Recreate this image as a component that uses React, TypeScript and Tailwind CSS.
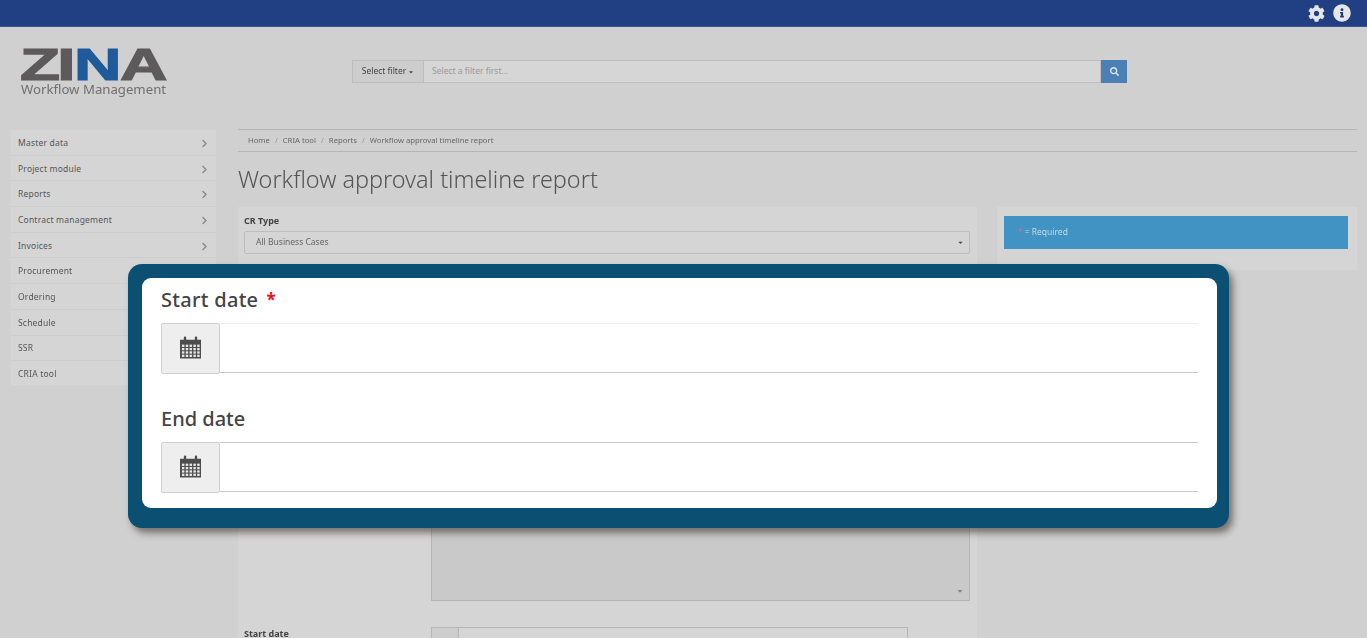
import { FaCog, FaInfoCircle, FaSearch, FaChevronRight, FaCaretDown } from "react-icons/fa";

const MENU = [
  { label: "Master data", arrow: true },
  { label: "Project module", arrow: true },
  { label: "Reports", arrow: true },
  { label: "Contract management", arrow: true },
  { label: "Invoices", arrow: true },
  { label: "Procurement", arrow: false },
  { label: "Ordering", arrow: false },
  { label: "Schedule", arrow: false },
  { label: "SSR", arrow: false },
  { label: "CRIA tool", arrow: false },
];

function CalendarIcon({ className }: { className?: string }) {
  const cols = [2, 6, 10, 14, 18];
  const rows = [8.5, 12, 15.5, 19];
  return (
    <svg viewBox="0 0 22 23" className={className}>
      <path fill="#4d4d4d" d="M0 3.5h4V1.2C4 .5 4.5 0 5.2 0s1.3.5 1.3 1.2v2.3h9V1.2c0-.7.6-1.2 1.3-1.2S18 .5 18 1.2v2.3h4V23H0z" />
      {rows.map((y) =>
        cols.map((x) => <rect key={`${x}-${y}`} x={x} y={y} width="2.6" height="2.4" fill="#e8e8e8" />)
      )}
    </svg>
  );
}

function DateGroup({ topLine }: { topLine: string }) {
  return (
    <div className="flex h-[51px]">
      <div className="flex w-[59px] items-center justify-center rounded-[2px] border border-[#cfcfcf] bg-[#eeeeee] pb-[2px]">
        <CalendarIcon className="h-[23px] w-[21px]" />
      </div>
      <div className={`mb-px flex-1 border-t border-b border-b-[#c8c8c8] ${topLine}`} />
    </div>
  );
}

export default function App() {
  return (
    <div className="relative h-[638px] w-[1367px] overflow-hidden bg-[#d0d0d0] font-['Noto_Sans',sans-serif]">
      {/* dimmed page behind the popup */}
      <div className="blur-[0.7px]">
        <div className="flex h-[27px] items-center justify-end gap-[8px] border-b border-[#3c5590] bg-[#213f83] pr-[16px] text-[#e6e6e6]">
          <FaCog className="h-[17px] w-[17px]" />
          <FaInfoCircle className="h-[18px] w-[18px]" />
        </div>

        <div className="flex h-[102px]">
          <div className="ml-[20px] mt-[21px] w-[147px]">
            <div className="h-[34px] font-['Liberation_Sans',sans-serif] text-[45px] leading-[34px] font-bold whitespace-nowrap text-[#5c5a5a] [-webkit-text-stroke:1.2px_currentColor]">
              <span className="inline-block origin-left scale-x-[1.46]">
                Z<span className="ml-[-2px]">I</span>
                <span className="ml-[-1px] text-[#1f5a9a]">N</span>
                <span className="ml-[-1px]">A</span>
              </span>
            </div>
            <div className="ml-[1px] mt-[-1px] text-[13.2px] leading-[17px] whitespace-nowrap text-[#6f6f6f]">Workflow Management</div>
          </div>
          <div className="ml-[185px] mt-[33px] flex h-[23px] w-[775px] text-[8.5px]">
            <div className="flex w-[72px] items-center justify-center gap-[2px] border border-[#bdbdbd] bg-[#cdcdcd] text-[#444444]">
              Select filter
              <FaCaretDown className="h-[6px] w-[6px]" />
            </div>
            <div className="flex flex-1 items-center border-y border-r border-[#bdbdbd] bg-[#d6d6d6] pl-[8px] text-[#9a9a9a]">
              Select a filter first...
            </div>
            <div className="flex w-[26px] items-center justify-center bg-[#4a80b3] text-[#dfe6ee]">
              <FaSearch className="h-[9px] w-[9px]" />
            </div>
          </div>
        </div>

        <div className="flex items-start">
          <div className="ml-[11px] mt-[1px] w-[205px] bg-[#d6d5d6]">
            {MENU.map((item) => (
              <div key={item.label} className="flex h-[25.7px] items-center justify-between border-b border-[#cdcdcd] pl-[7px] pr-[7px] pt-[2px] text-[8.5px] tracking-[0.2px] text-[#555555]">
                {item.label}
                {item.arrow && <FaChevronRight className="h-[9px] w-[9px] text-[#8a8a8a]" />}
              </div>
            ))}
          </div>

          <div className="ml-[22px] w-[1119px]">
            <div className="flex h-[23px] items-center gap-[5px] border-y border-[#b5b5b5] pl-[10px] text-[7.7px] text-[#666666]">
              <span>Home</span>
              <span className="text-[#999999]">/</span>
              <span>CRIA tool</span>
              <span className="text-[#999999]">/</span>
              <span>Reports</span>
              <span className="text-[#999999]">/</span>
              <span>Workflow approval timeline report</span>
            </div>
            <h1 className="mt-[12px] text-[23.4px] leading-[30px] font-light text-[#555555]">Workflow approval timeline report</h1>

            <div className="mt-[13px] flex items-start gap-[20px]">
              <div className="h-[440px] w-[739px] bg-[#d6d5d6] px-[6px] pt-[7px]">
                <div className="text-[9px] leading-[13px] font-bold text-[#444444]">CR Type</div>
                <div className="mr-[1px] mt-[4px] flex h-[23px] items-center justify-between rounded-[2px] border border-[#bdbdbd] bg-[#d5d5d5] pl-[11px] pr-[5px] text-[8.5px] text-[#666666]">
                  All Business Cases
                  <FaCaretDown className="h-[7px] w-[7px] text-[#444444]" />
                </div>
                <div className="ml-[187px] mr-[1px] mt-[201px] flex h-[146px] items-end justify-end border border-[#b5b5b5] bg-[#c9c9c9] p-[5px]">
                  <FaCaretDown className="h-[8px] w-[8px] text-[#888888]" />
                </div>
                <div className="mt-[26px] flex items-start">
                  <div className="w-[187px] text-[9px] leading-[13px] font-bold text-[#444444]">Start date</div>
                  <div className="flex h-[24px] w-[477px] border border-[#b5b5b5] bg-[#d6d6d6]">
                    <div className="w-[27px] border-r border-[#b5b5b5] bg-[#cdcdcd]" />
                  </div>
                </div>
              </div>

              <div className="h-[63px] w-[360px] bg-[#d6d5d6] pl-[7px] pr-[9px] pt-[9px]">
                <div className="flex h-[33px] items-center gap-[2px] bg-[#4093c2] pl-[14px] text-[8.5px] text-[#c9dbe6]">
                  <span className="text-[#c2789a]">*</span>
                  <span>= Required</span>
                </div>
              </div>
            </div>
          </div>
        </div>
      </div>

      {/* date popup */}
      <div className="absolute left-[128px] top-[264px] w-[1101px] rounded-[14px] bg-[#0b5072] pb-[20px] pl-[14px] pr-[12px] pt-[14px] shadow-[4px_5px_7px_rgba(60,50,50,0.6)]">
        <div className="rounded-[9px] bg-white px-[19px] pt-[8px] pb-[15px]">
          <div className="mb-[9px] flex text-[20px] leading-[28px] font-medium text-[#444444]">
            <span className="tracking-[0.3px]">Start date</span>
            <span className="ml-[8px] text-[17px] font-bold text-[#e8141c]">*</span>
          </div>
          <DateGroup topLine="border-t-[#eeeeee]" />
          <div className="mb-[9px] mt-[31px] text-[20px] leading-[28px] font-medium text-[#444444]">End date</div>
          <DateGroup topLine="border-t-[#c8c8c8]" />
        </div>
      </div>
    </div>
  );
}
